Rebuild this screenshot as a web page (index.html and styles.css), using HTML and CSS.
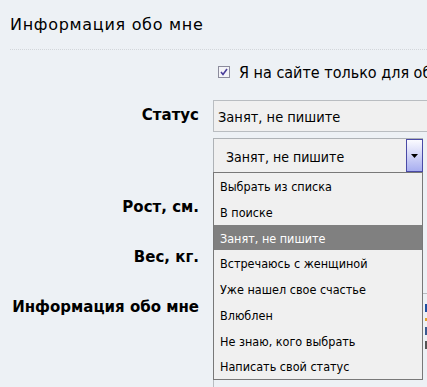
FILE: index.html
```html
<!DOCTYPE html>
<html lang="ru">
<head>
<meta charset="utf-8">
<link rel="stylesheet" href="styles.css">
</head>
<body>
<div class="page">
  <h1 class="title">Информация обо мне</h1>
  <div class="sep"></div>
  <div class="form">
    <div class="label"></div>
    <div class="field check-row">
      <span class="checkbox"><svg width="12" height="12" viewBox="0 0 12 12"><rect x="0.5" y="0.5" width="11" height="11" fill="#f4f4f8" stroke="#8c8c9c"/><path d="M3 6 L5 8.5 L9 3" fill="none" stroke="#4a3e9a" stroke-width="1.6"/></svg></span>
      <span class="check-text">Я на сайте только для общения</span>
    </div>

    <div class="label status-label">Статус</div>
    <div class="field">
      <div class="input">Занят, не пишите</div>
      <div class="select-wrap">
        <div class="select">
          <span class="select-text">Занят, не пишите</span>
          <span class="arrow"><svg width="7" height="4" viewBox="0 0 7 4"><path d="M0 0 H7 L3.5 4 Z" fill="#000"/></svg></span>
        </div>
        <ul class="list">
          <li>Выбрать из списка</li>
          <li>В поиске</li>
          <li class="active">Занят, не пишите</li>
          <li>Встречаюсь с женщиной</li>
          <li>Уже нашел свое счастье</li>
          <li>Влюблен</li>
          <li>Не знаю, кого выбрать</li>
          <li>Написать свой статус</li>
        </ul>
      </div>
    </div>

    <div class="label row-label">Рост, см.</div>
    <div class="field"><div class="small-input"></div></div>

    <div class="label row-label">Вес, кг.</div>
    <div class="field"><div class="small-input"></div></div>

    <div class="label row-label">Информация обо мне</div>
    <div class="field">
      <div class="editor">
        <div class="toolbar"><span class="t1"></span><span class="t2"></span><span class="t3"></span><span class="t4"></span></div>
      </div>
    </div>
  </div>
</div>
</body>
</html>
```

FILE: styles.css
```css
html, body {
  margin: 0;
  padding: 0;
  background: #edf1f5;
  overflow: hidden;
}
.page {
  width: 427px;
  height: 387px;
  overflow: hidden;
  font-family: "DejaVu Sans Condensed", "DejaVu Sans", sans-serif;
  color: #000;
}
.title {
  margin: 0;
  padding: 14px 0 0 10px;
  font-family: "DejaVu Sans", sans-serif;
  font-size: 16px;
  letter-spacing: 0.7px;
  line-height: 22px;
  font-weight: normal;
}
.sep {
  margin: 13px 0 0 10px;
  border-top: 1px dotted #d2d6da;
}
.form {
  display: grid;
  grid-template-columns: 199px 1fr;
  column-gap: 14px;
}
.label {
  text-align: right;
  font-family: "DejaVu Sans", sans-serif;
  font-weight: bold;
  font-size: 15px;
  line-height: 18px;
  white-space: nowrap;
}
.field {
  min-width: 0;
  white-space: nowrap;
}
.check-row {
  display: flex;
  align-items: center;
  padding: 12px 0 0 5px;
  height: 20px;
  gap: 9px;
  font-size: 16px;
}
.checkbox {
  display: flex;
}
.status-label {
  padding-top: 24px;
}
.field .input {
  margin-top: 18px;
  height: 30px;
  width: 240px;
  border: 1px solid #b9bdc1;
  border-right: none;
  background: #f0f0f0;
  font-size: 14.5px;
  line-height: 32px;
  padding-left: 4px;
}
.select-wrap {
  position: relative;
  margin: 6px 0 9px;
  width: 210px;
}
.select {
  display: flex;
  justify-content: space-between;
  height: 33px;
  border: 1px solid #aeb2b6;
  background: #f0f0f0;
  align-items: center;
}
.select-text {
  font-size: 14px;
  padding: 2px 0 0 12px;
}
.arrow {
  display: flex;
  align-items: center;
  justify-content: center;
  width: 15px;
  height: 31px;
  border: 1px solid #4a4aa6;
  background: linear-gradient(#fbfbff, #a8aef0);
  margin-right: -1px;
}
.list {
  position: absolute;
  left: 0;
  top: 34px;
  width: 208px;
  margin: 0;
  padding: 0;
  list-style: none;
  background: #f0f0f0;
  border: 1px solid #787878;
  z-index: 2;
}
.list li {
  box-sizing: border-box;
  height: 25.75px;
  padding: 2px 0 0 6px;
  line-height: 23.75px;
  font-size: 12.5px;
}
.list li.active {
  background: #808080;
  color: #fff;
}
.row-label {
  padding-top: 16px;
  height: 34px;
}
.small-input {
  height: 30px;
  margin-top: 10px;
  width: 100px;
  border: 1px solid #b9bdc1;
  background: #f0f0f0;
}
.editor {
  margin-top: 11px;
  height: 100px;
  border-top: 1px solid #b9bdc1;
  border-left: 1px solid #b9bdc1;
  display: flex;
}
.toolbar {
  margin-left: 211px;
  display: flex;
  flex-direction: column;
  gap: 6px;
  padding-top: 10px;
}
.toolbar span {
  display: block;
  width: 6px;
  height: 8px;
}
.t1 { background: #1f4fa0; }
.t2 { background: #e0a030; height: 3px !important; }
.t3 { background: #3a5a90; }
.t4 { background: #555; }
```
